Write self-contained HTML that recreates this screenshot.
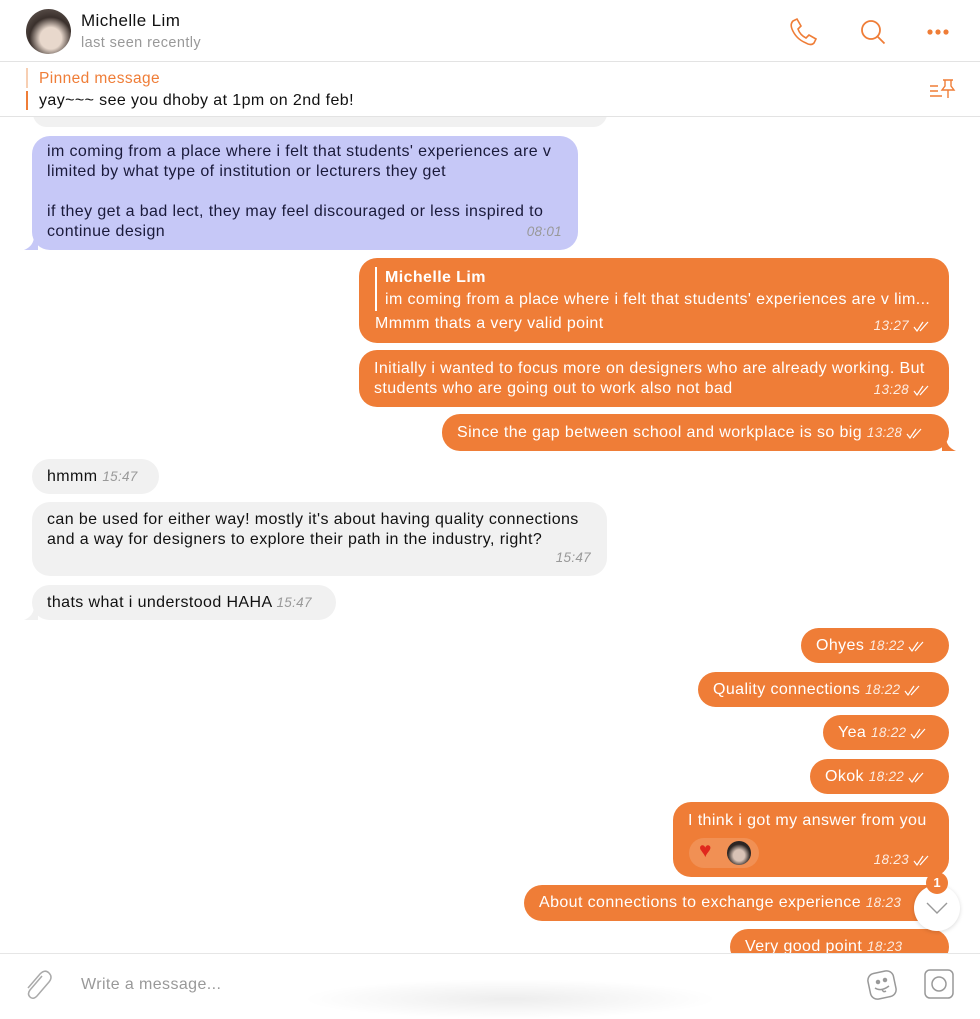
<!DOCTYPE html>
<html><head><meta charset="utf-8"><style>
*{margin:0;padding:0;box-sizing:border-box}
body{width:980px;height:1014px;overflow:hidden;background:#fff;font-family:"Liberation Sans",Arial,sans-serif;position:relative;color:#111;letter-spacing:0.4px}
.b{position:absolute;border-radius:18px;font-size:16px;line-height:20px;padding:8px 15px;white-space:nowrap}
.w{white-space:normal}
.o{background:#ef7d37;color:#fff}
.g{background:#f1f1f1;color:#111}
.p{background:#c6c8f7;color:#1a1a3a}
.t{font-style:italic;font-size:13.5px;color:rgba(255,255,255,.85);letter-spacing:0.3px}
.g .t,.p .t{color:#999}
.abs{position:absolute}
.ck{display:inline-block;width:18px;height:11px;vertical-align:middle}
</style></head><body>

<div class="b g" style="left:33px;top:100px;width:574px;height:27px"></div>
<div class="b p w" style="left:32px;top:136px;width:546px;height:114px;padding-top:6px">im coming from a place where i felt that students' experiences are v limited by what type of institution or lecturers they get<br><br>if they get a bad lect, they may feel discouraged or less inspired to continue design<span class="t abs" style="right:16px;bottom:8px">08:01</span></div>
<svg class="abs" style="left:24px;top:236px" width="14" height="14"><path d="M14 0 V14 H0 Q10 10 10 0Z" fill="#c6c8f7"/></svg>

<div class="b o" style="left:359px;top:258px;width:590px;height:85px;padding:9px 16px">
<div style="border-left:2px solid #fff;padding-left:8px;line-height:22px"><b style="font-weight:600">Michelle Lim</b><br>im coming from a place where i felt that students' experiences are v lim...</div>
<div style="margin-top:3px">Mmmm thats a very valid point</div>
<span class="t abs" style="right:18px;bottom:7px">13:27 <svg class="ck"><path d="M1 6l3 4 6-9M7 10l8-9" stroke="#fff" fill="none" stroke-width="1.2"/></svg></span></div>

<div class="b o w" style="left:359px;top:350px;width:590px;height:57px;padding-top:9px">Initially i wanted to focus more on designers who are already working. But students who are going out to work also not bad<span class="t abs" style="right:18px;bottom:7px">13:28 <svg class="ck"><path d="M1 6l3 4 6-9M7 10l8-9" stroke="#fff" fill="none" stroke-width="1.2"/></svg></span></div>

<div class="b o" style="left:442px;top:414px;width:507px;height:37px;padding-top:9px">Since the gap between school and workplace is so big <span class="t">13:28 <svg class="ck"><path d="M1 6l3 4 6-9M7 10l8-9" stroke="#fff" fill="none" stroke-width="1.2"/></svg></span></div>
<svg class="abs" style="left:942px;top:437px" width="14" height="14"><path d="M0 0 V14 H14 Q4 10 4 0Z" fill="#ef7d37"/></svg>

<div class="b g" style="left:32px;top:459px;width:127px;height:35px;padding-top:8px">hmmm <span class="t">15:47</span></div>
<div class="b g w" style="left:32px;top:502px;width:575px;height:74px;padding-top:8px">can be used for either way! mostly it's about having quality connections and a way for designers to explore their path in the industry, right?<span class="t abs" style="right:16px;bottom:8px">15:47</span></div>
<div class="b g" style="left:32px;top:585px;width:304px;height:35px;padding-top:8px">thats what i understood HAHA <span class="t">15:47</span></div>
<svg class="abs" style="left:24px;top:606px" width="14" height="14"><path d="M14 0 V14 H0 Q10 10 10 0Z" fill="#f1f1f1"/></svg>

<div class="b o" style="left:801px;top:628px;width:148px;height:35px;padding-top:8px">Ohyes <span class="t">18:22 <svg class="ck"><path d="M1 6l3 4 6-9M7 10l8-9" stroke="#fff" fill="none" stroke-width="1.2"/></svg></span></div>
<div class="b o" style="left:698px;top:672px;width:251px;height:35px;padding-top:8px">Quality connections <span class="t">18:22 <svg class="ck"><path d="M1 6l3 4 6-9M7 10l8-9" stroke="#fff" fill="none" stroke-width="1.2"/></svg></span></div>
<div class="b o" style="left:823px;top:715px;width:126px;height:35px;padding-top:8px">Yea <span class="t">18:22 <svg class="ck"><path d="M1 6l3 4 6-9M7 10l8-9" stroke="#fff" fill="none" stroke-width="1.2"/></svg></span></div>
<div class="b o" style="left:810px;top:759px;width:139px;height:35px;padding-top:8px">Okok <span class="t">18:22 <svg class="ck"><path d="M1 6l3 4 6-9M7 10l8-9" stroke="#fff" fill="none" stroke-width="1.2"/></svg></span></div>
<div class="b o" style="left:673px;top:802px;width:276px;height:75px;padding-top:9px">I think i got my answer from you
<div class="abs" style="left:16px;top:36px;width:70px;height:30px;border-radius:15px;background:rgba(255,255,255,.15)"><span class="abs" style="left:10px;top:3px;color:#e0281d;font-size:21px">♥</span><span class="abs" style="left:38px;top:3px;width:24px;height:24px;border-radius:50%;background:radial-gradient(circle at 50% 60%,#d8c2b5 30%,#2b2523 60%)"></span></div>
<span class="t abs" style="right:18px;bottom:7px">18:23 <svg class="ck"><path d="M1 6l3 4 6-9M7 10l8-9" stroke="#fff" fill="none" stroke-width="1.2"/></svg></span></div>
<div class="b o" style="left:524px;top:885px;width:425px;height:36px;padding-top:8px">About connections to exchange experience <span class="t">18:23</span></div>
<div class="b o" style="left:730px;top:929px;width:219px;height:36px;padding-top:8px">Very good point <span class="t">18:23</span></div>

<div class="abs" style="left:914px;top:885px;width:46px;height:46px;border-radius:50%;background:#fff;box-shadow:0 1px 4px rgba(0,0,0,.15)"><svg class="abs" style="left:12px;top:17px" width="22" height="12"><path d="M1 1l10 10 10-10" stroke="#999" fill="none" stroke-width="1.4"/></svg></div>
<div class="abs" style="left:926px;top:872px;width:22px;height:22px;border-radius:50%;background:#ef7d37;color:#fff;font-size:13px;font-weight:bold;text-align:center;line-height:22px;letter-spacing:0">1</div>

<div class="abs" style="left:0;top:0;width:980px;height:62px;background:#fff;border-bottom:1px solid #e3e3e3">
<div class="abs" style="left:26px;top:9px;width:45px;height:45px;border-radius:50%;background:radial-gradient(circle at 55% 65%,#e8d8cc 28%,#3a302c 55%,#6f645e 100%)"></div>
<div class="abs" style="left:81px;top:11px;font-size:17px">Michelle Lim</div>
<div class="abs" style="left:81px;top:35px;font-size:14.5px;color:#999">last seen recently</div>
<svg class="abs" style="left:788px;top:17px" width="30" height="30" fill="none" stroke="#ef7d37" stroke-width="1.6"><path d="M5 4l4-2 4 7-3 3q2 6 8 9l3-3 7 4-2 4q-3 3-8 0Q8 22 4 12Q2 7 5 4z"/></svg>
<svg class="abs" style="left:859px;top:18px" width="28" height="28" fill="none" stroke="#ef7d37" stroke-width="1.8"><circle cx="12" cy="12" r="9"/><path d="M18.5 18.5l7 7"/></svg>
<svg class="abs" style="left:926px;top:28px" width="26" height="8" fill="#ef7d37"><circle cx="4" cy="4" r="2.6"/><circle cx="12" cy="4" r="2.6"/><circle cx="20" cy="4" r="2.6"/></svg>
</div>
<div class="abs" style="left:0;top:62px;width:980px;height:55px;background:#fff;border-bottom:1px solid #e3e3e3">
<div class="abs" style="left:26px;top:6px;width:2px;height:20px;background:#f7cfb3"></div>
<div class="abs" style="left:26px;top:29px;width:2px;height:19px;background:#ef7d37"></div>
<div class="abs" style="left:39px;top:8px;font-size:15.5px;color:#ef7d37">Pinned message</div>
<div class="abs" style="left:39px;top:30px;font-size:16px">yay~~~ see you dhoby at 1pm on 2nd feb!</div>
<svg class="abs" style="left:929px;top:16px" width="28" height="22" fill="none" stroke="#ef7d37" stroke-width="1.4"><path d="M1 8h8M1 13h8M1 18h12M14 2h10M16 2v6l-3 4h12l-3-4V2M19 12v8"/></svg>
</div>

<div class="abs" style="left:0;top:953px;width:980px;height:61px;background:#fff;border-top:1px solid #e6e6e6">
<div class="abs" style="left:300px;top:25px;width:420px;height:40px;border-radius:50%;background:radial-gradient(ellipse,rgba(0,0,0,.07),rgba(0,0,0,0) 70%)"></div>
<svg class="abs" style="left:22px;top:14px" width="30" height="34" fill="none" stroke="#aaa" stroke-width="1.5"><path d="M20 8L8 22q-3 4 0 7t7-1l12-14q4-5 0-9t-9 1L6 20"/></svg>
<div class="abs" style="left:81px;top:22px;font-size:16px;color:#999">Write a message...</div>
<svg class="abs" style="left:864px;top:14px" width="36" height="34" fill="none" stroke="#999" stroke-width="1.5"><rect x="5" y="4" width="26" height="26" rx="7" transform="rotate(-12 18 17)"/><circle cx="14" cy="14" r="1.5" fill="#999"/><circle cx="21" cy="12" r="1.5" fill="#999"/><path d="M11 20q6 4 14-2M18 21q1 4 4 2"/></svg>
<svg class="abs" style="left:923px;top:14px" width="32" height="32" fill="none" stroke="#999" stroke-width="1.5"><rect x="2" y="2" width="28" height="28" rx="5"/><circle cx="16" cy="16" r="7"/></svg>
</div>
</body></html>
